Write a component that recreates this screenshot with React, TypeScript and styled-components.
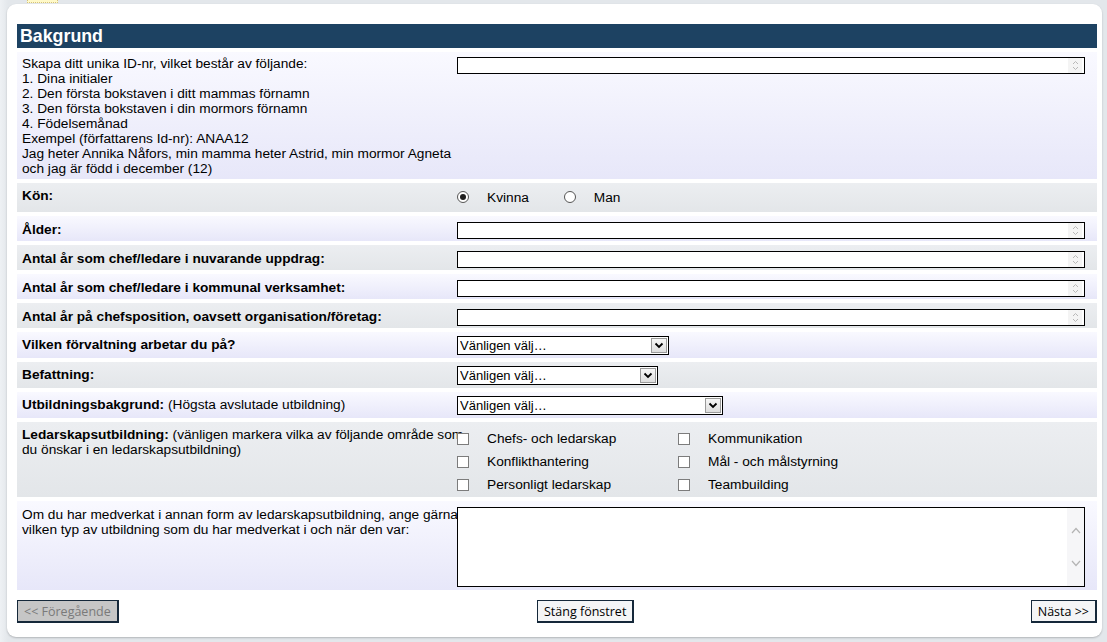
import React from 'react';
import styled, { createGlobalStyle } from 'styled-components';

const GlobalStyle = createGlobalStyle`
  html, body {
    margin: 0;
    padding: 0;
    background: #e3e7eb;
  }
  body {
    font-family: "Liberation Sans", Arial, sans-serif;
    font-size: 13.7px;
    color: #000;
  }
`;

const Page = styled.div`
  width: 1107px;
  height: 642px;
  overflow: hidden;
  background: linear-gradient(to right, #eef1f4 0, #e3e7eb 8px);
`;

const TopStrip = styled.div`
  height: 4px;
  padding-left: 27px;
  box-sizing: border-box;
`;

const Tab = styled.div`
  width: 31px;
  height: 3px;
  background: #fff9c8;
  border: 1px dotted #d4c27a;
  border-top: none;
  box-sizing: border-box;
`;

const Card = styled.div`
  margin-left: 7px;
  width: 1095px;
  box-sizing: border-box;
  background: #fff;
  border-radius: 9px;
  box-shadow: 0 1px 2px rgba(0, 0, 0, 0.22);
  padding: 20px 5px 14px 10px;
`;

const Header = styled.h2`
  margin: 0 0 4px;
  height: 24px;
  padding-left: 3px;
  background: #1d4262;
  color: #fff;
  font-size: 17.8px;
  font-weight: bold;
  line-height: 24px;
`;

const Rows = styled.div`
  display: flex;
  flex-direction: column;
  gap: 4px;
`;

const Row = styled.div<{ $tone: 'lavender' | 'gray'; $height: number }>`
  display: grid;
  grid-template-columns: 440px 1fr;
  height: ${p => p.$height}px;
  background: ${p =>
    p.$tone === 'lavender'
      ? 'linear-gradient(#f9f9ff, #e7e7f9)'
      : 'linear-gradient(#eceef1, #e3e6e9)'};
`;

const Label = styled.div<{ $top?: number }>`
  padding: ${p => p.$top ?? 5}px 0 0 5px;
  line-height: 15px;
  white-space: nowrap;
`;

const Control = styled.div<{ $top: number }>`
  padding-top: ${p => p.$top}px;
`;

const FieldBox = styled.div`
  display: flex;
  width: 628px;
  height: 17px;
  box-sizing: border-box;
  border: 1px solid #000;
  background: #fff;
`;

const FieldInput = styled.input`
  flex: 1;
  min-width: 0;
  border: none;
  outline: none;
  padding: 0 2px;
  background: transparent;
  font: inherit;
`;

const Spinner = styled.span`
  width: 14px;
  margin-right: 2px;
  display: flex;
  align-items: center;
  justify-content: center;
  background: #f4f4f4;
`;

const SelectBox = styled.div<{ $width: number }>`
  display: flex;
  width: ${p => p.$width}px;
  height: 19px;
  box-sizing: border-box;
  border: 1px solid #000;
  background: #fff;
`;

const SelectEl = styled.select`
  flex: 1;
  min-width: 0;
  appearance: none;
  border: none;
  outline: none;
  padding: 0 2px;
  background: transparent;
  color: #000;
  font: 13px "Liberation Sans", Arial, sans-serif;
`;

const SelectArrow = styled.span`
  width: 16px;
  margin: 1px;
  box-sizing: border-box;
  border: 1px solid #9a9a9a;
  background: linear-gradient(#f6f6f6, #dedede);
  display: flex;
  align-items: center;
  justify-content: center;
`;

const RadioGroup = styled.div`
  display: flex;
  align-items: center;
  height: 12px;
`;

const RadioOption = styled.label`
  display: flex;
  align-items: center;
  gap: 18px;
  margin-right: 35px;
`;

const RadioDot = styled.span<{ $checked?: boolean }>`
  width: 12px;
  height: 12px;
  box-sizing: border-box;
  border: 1px solid #555;
  border-radius: 50%;
  background: #fff;
  display: flex;
  align-items: center;
  justify-content: center;

  &::after {
    content: '';
    width: 6px;
    height: 6px;
    border-radius: 50%;
    background: ${p => (p.$checked ? '#1e1e1e' : 'transparent')};
  }
`;

const CheckGrid = styled.div`
  display: grid;
  grid-template-columns: 221px 221px;
  grid-auto-rows: 23px;
`;

const CheckOption = styled.label`
  display: flex;
  align-items: center;
  gap: 18px;
  white-space: nowrap;
`;

const CheckBox = styled.span`
  width: 12px;
  height: 12px;
  box-sizing: border-box;
  border: 1px solid #7c7c7c;
  background: #fff;
`;

const AreaBox = styled.div`
  display: flex;
  width: 628px;
  height: 80px;
  box-sizing: border-box;
  border: 1px solid #000;
  background: #fff;
`;

const AreaInput = styled.textarea`
  flex: 1;
  min-width: 0;
  border: none;
  outline: none;
  resize: none;
  padding: 2px;
  font: inherit;
`;

const ScrollTrack = styled.div`
  width: 17px;
  background: #f6f6f8;
  display: flex;
  flex-direction: column;
  align-items: center;
  justify-content: center;
  gap: 26px;
`;

const Footer = styled.div`
  display: grid;
  grid-template-columns: 520px auto 1fr;
  align-items: start;
  margin-top: 10px;
`;

const NavButton = styled.button<{ $inactive?: boolean; $end?: boolean }>`
  justify-self: ${p => (p.$end ? 'end' : 'start')};
  height: 23px;
  padding: 0 6px;
  border: 1px solid #15283a;
  border-right-width: 2px;
  border-bottom-width: 2px;
  background: ${p => (p.$inactive ? '#c6c6c6' : '#f4f5f6')};
  color: ${p => (p.$inactive ? '#7a7a7a' : '#000')};
  font: 12.5px "Open Sans", "DejaVu Sans", sans-serif;
  line-height: 19px;
  cursor: pointer;
`;

const SpinIcon = () => (
  <svg width="7" height="11" viewBox="0 0 7 11">
    <path d="M1 4 L3.5 1.5 L6 4 M1 7 L3.5 9.5 L6 7" fill="none" stroke="#b8b8b8" strokeWidth="1" />
  </svg>
);

const Chevron = () => (
  <svg width="10" height="7" viewBox="0 0 10 7">
    <path d="M1.5 1.5 L5 5 L8.5 1.5" fill="none" stroke="#000" strokeWidth="1.8" />
  </svg>
);

const ScrollArrow = ({ up }: { up?: boolean }) => (
  <svg width="10" height="7" viewBox="0 0 10 7">
    <path d={up ? 'M1 6 L5 1.5 L9 6' : 'M1 1 L5 5.5 L9 1'} fill="none" stroke="#b4b4b4" strokeWidth="1.2" />
  </svg>
);

const TextField = () => (
  <FieldBox>
    <FieldInput type="text" />
    <Spinner>
      <SpinIcon />
    </Spinner>
  </FieldBox>
);

const Dropdown = ({ width }: { width: number }) => (
  <SelectBox $width={width}>
    <SelectEl defaultValue="">
      <option value="">Vänligen välj…</option>
    </SelectEl>
    <SelectArrow>
      <Chevron />
    </SelectArrow>
  </SelectBox>
);

const numberRows = [
  { label: 'Ålder:', tone: 'lavender' as const },
  { label: 'Antal år som chef/ledare i nuvarande uppdrag:', tone: 'gray' as const },
  { label: 'Antal år som chef/ledare i kommunal verksamhet:', tone: 'lavender' as const },
  { label: 'Antal år på chefsposition, oavsett organisation/företag:', tone: 'gray' as const },
];

const areas = [
  'Chefs- och ledarskap',
  'Kommunikation',
  'Konflikthantering',
  'Mål - och målstyrning',
  'Personligt ledarskap',
  'Teambuilding',
];

const App: React.FC = () => {
  return (
    <Page>
      <GlobalStyle />
      <TopStrip>
        <Tab />
      </TopStrip>
      <Card>
        <Header>Bakgrund</Header>
        <Rows>
          <Row $tone="lavender" $height={127}>
            <Label $top={4}>
              Skapa ditt unika ID-nr, vilket består av följande:
              <br />
              1. Dina initialer
              <br />
              2. Den första bokstaven i ditt mammas förnamn
              <br />
              3. Den första bokstaven i din mormors förnamn
              <br />
              4. Födelsemånad
              <br />
              Exempel (författarens Id-nr): ANAA12
              <br />
              Jag heter Annika Nåfors, min mamma heter Astrid, min mormor Agneta
              <br />
              och jag är född i december (12)
            </Label>
            <Control $top={5}>
              <TextField />
            </Control>
          </Row>

          <Row $tone="gray" $height={29}>
            <Label>
              <b>Kön:</b>
            </Label>
            <Control $top={8}>
              <RadioGroup>
                <RadioOption>
                  <RadioDot $checked />
                  Kvinna
                </RadioOption>
                <RadioOption>
                  <RadioDot />
                  Man
                </RadioOption>
              </RadioGroup>
            </Control>
          </Row>

          {numberRows.map(r => (
            <Row key={r.label} $tone={r.tone} $height={25}>
              <Label $top={6}>
                <b>{r.label}</b>
              </Label>
              <Control $top={6}>
                <TextField />
              </Control>
            </Row>
          ))}

          <Row $tone="lavender" $height={26}>
            <Label>
              <b>Vilken förvaltning arbetar du på?</b>
            </Label>
            <Control $top={4}>
              <Dropdown width={212} />
            </Control>
          </Row>

          <Row $tone="gray" $height={26}>
            <Label>
              <b>Befattning:</b>
            </Label>
            <Control $top={4}>
              <Dropdown width={201} />
            </Control>
          </Row>

          <Row $tone="lavender" $height={26}>
            <Label>
              <b>Utbildningsbakgrund:</b> (Högsta avslutade utbildning)
            </Label>
            <Control $top={4}>
              <Dropdown width={266} />
            </Control>
          </Row>

          <Row $tone="gray" $height={75}>
            <Label>
              <b>Ledarskapsutbildning:</b> (vänligen markera vilka av följande område som
              <br />
              du önskar i en ledarskapsutbildning)
            </Label>
            <Control $top={5}>
              <CheckGrid>
                {areas.map(a => (
                  <CheckOption key={a}>
                    <CheckBox />
                    {a}
                  </CheckOption>
                ))}
              </CheckGrid>
            </Control>
          </Row>

          <Row $tone="lavender" $height={89}>
            <Label $top={6}>
              Om du har medverkat i annan form av ledarskapsutbildning, ange gärna
              <br />
              vilken typ av utbildning som du har medverkat i och när den var:
            </Label>
            <Control $top={6}>
              <AreaBox>
                <AreaInput />
                <ScrollTrack>
                  <ScrollArrow up />
                  <ScrollArrow />
                </ScrollTrack>
              </AreaBox>
            </Control>
          </Row>
        </Rows>

        <Footer>
          <NavButton $inactive>&lt;&lt; Föregående</NavButton>
          <NavButton>Stäng fönstret</NavButton>
          <NavButton $end>Nästa &gt;&gt;</NavButton>
        </Footer>
      </Card>
    </Page>
  );
};

export default App;
